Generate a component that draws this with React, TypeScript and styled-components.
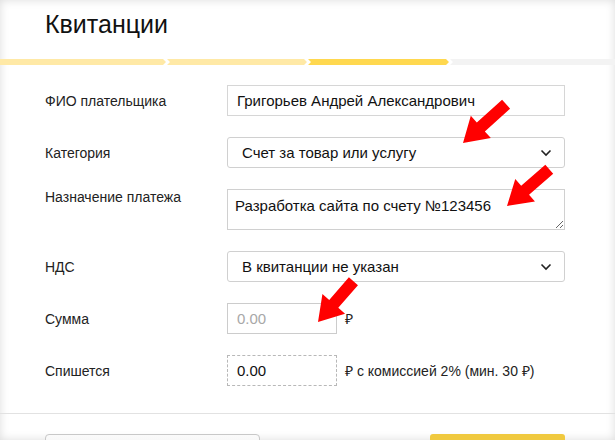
import React from 'react';
import styled, { createGlobalStyle } from 'styled-components';

const GlobalStyle = createGlobalStyle`
  html, body {
    margin: 0;
    padding: 0;
    background: #ffffff;
  }
  body {
    font-family: "Liberation Sans", Arial, sans-serif;
    color: #1a1a1a;
  }
`;

type Step = 'done' | 'active' | 'todo';

const steps: { state: Step; width: number }[] = [
  { state: 'done', width: 166 },
  { state: 'done', width: 140 },
  { state: 'active', width: 141 },
  { state: 'todo', width: 0 }
];

type Arrow = { tipX: number; tipY: number; angle: number; length: number };

// red annotation arrows drawn over the form
const arrows: Arrow[] = [
  { tipX: 463, tipY: 143, angle: 138, length: 58 },
  { tipX: 507, tipY: 206, angle: 139, length: 56 },
  { tipX: 318, tipY: 322, angle: 131, length: 54 }
];

const App: React.FC = () => (
  <>
    <GlobalStyle />
    <StyledPage>
      <StyledHeader>
        <StyledTitle>Квитанции</StyledTitle>
      </StyledHeader>
      <StyledProgress>
        {steps.map((step, i) => (
          <StyledStep
            key={i}
            state={step.state}
            first={i === 0}
            grow={step.width === 0}
            style={step.width ? { width: step.width } : undefined}
          />
        ))}
      </StyledProgress>

      <StyledForm>
        <StyledRow>
          <StyledLabel>ФИО плательщика</StyledLabel>
          <StyledInput defaultValue="Григорьев Андрей Александрович" />
        </StyledRow>
        <StyledRow>
          <StyledLabel>Категория</StyledLabel>
          <StyledSelect>
            <span>Счет за товар или услугу</span>
            <Chevron />
          </StyledSelect>
        </StyledRow>
        <StyledRow top>
          <StyledLabel>Назначение платежа</StyledLabel>
          <StyledTextarea defaultValue="Разработка сайта по счету №123456" />
        </StyledRow>
        <StyledRow>
          <StyledLabel>НДС</StyledLabel>
          <StyledSelect>
            <span>В квитанции не указан</span>
            <Chevron />
          </StyledSelect>
        </StyledRow>
        <StyledRow>
          <StyledLabel>Сумма</StyledLabel>
          <StyledAmount>
            <StyledSmallInput placeholder="0.00" />
            <StyledUnit>₽</StyledUnit>
          </StyledAmount>
        </StyledRow>
        <StyledRow>
          <StyledLabel>Спишется</StyledLabel>
          <StyledAmount>
            <StyledSmallInput dashed defaultValue="0.00" readOnly />
            <StyledUnit>₽ с комиссией 2% (мин. 30 ₽)</StyledUnit>
          </StyledAmount>
        </StyledRow>
      </StyledForm>

      <StyledFooter>
        <StyledGhostButton />
        <StyledYellowButton />
      </StyledFooter>

      <StyledArrows width="615" height="440" viewBox="0 0 615 440">
        {arrows.map((a, i) => (
          <polygon
            key={i}
            transform={`translate(${a.tipX} ${a.tipY}) rotate(${a.angle})`}
            points={`0,0 -24,-15 -24,-6 ${-a.length},-6 ${-a.length},6 -24,6 -24,15`}
            fill="#ff0000"
          />
        ))}
      </StyledArrows>
    </StyledPage>
  </>
);

const Chevron: React.FC = () => (
  <svg width="12" height="8" viewBox="0 0 12 8">
    <path d="M1.5 1.5 L6 6 L10.5 1.5" fill="none" stroke="#222" strokeWidth="1.6" />
  </svg>
);

const StyledPage = styled.div`
  position: relative;
  width: 615px;
  height: 440px;
  overflow: hidden;
  background: #fff;
  box-shadow: inset 0 0 10px rgba(0, 0, 0, 0.14);
`;

const StyledHeader = styled.div`
  padding: 10px 45px 0;
  height: 49px;
  box-sizing: border-box;
`;

const StyledTitle = styled.h1`
  margin: 0;
  font-size: 25px;
  font-weight: 400;
  line-height: 29px;
  color: #111;
`;

const StyledProgress = styled.div`
  display: flex;
  gap: 1px;
  height: 6px;
  margin-top: 10px;
`;

const StyledStep = styled.div<{ state: Step; first: boolean; grow: boolean }>`
  flex: ${({ grow }) => (grow ? '1' : '0 0 auto')};
  background: ${({ state }) =>
    state === 'done' ? '#ffe9a6' : state === 'active' ? '#ffd84f' : '#f3f3f3'};
  clip-path: ${({ first, grow }) =>
    grow
      ? 'polygon(0 0, 100% 0, 100% 100%, 0 100%, 3px 50%)'
      : first
        ? 'polygon(0 0, calc(100% - 3px) 0, 100% 50%, calc(100% - 3px) 100%, 0 100%)'
        : 'polygon(0 0, calc(100% - 3px) 0, 100% 50%, calc(100% - 3px) 100%, 0 100%, 3px 50%)'};
`;

const StyledForm = styled.div`
  display: flex;
  flex-direction: column;
  gap: 21px;
  padding: 20px 50px 0 45px;
`;

const StyledRow = styled.div<{ top?: boolean }>`
  display: flex;
  align-items: ${({ top }) => (top ? 'flex-start' : 'center')};
`;

const StyledLabel = styled.label`
  flex: 0 0 182px;
  font-size: 14px;
  color: #222;
  line-height: 16px;
`;

const fieldBase = `
  box-sizing: border-box;
  font-family: "Liberation Sans", Arial, sans-serif;
  font-size: 15px;
  color: #111;
  background: #fff;
  outline: none;
`;

const StyledInput = styled.input`
  ${fieldBase}
  width: 338px;
  height: 31px;
  border: 1px solid #d6d6d6;
  padding: 0 9px;
`;

const StyledSelect = styled.div`
  ${fieldBase}
  width: 338px;
  height: 31px;
  border: 1px solid #d0d0d0;
  border-radius: 3px;
  display: flex;
  align-items: center;
  justify-content: space-between;
  padding: 0 12px 0 14px;
`;

const StyledTextarea = styled.textarea`
  ${fieldBase}
  display: block;
  width: 338px;
  height: 41px;
  border: 1px solid #d0d0d0;
  padding: 7px;
  resize: vertical;
  line-height: 18px;
`;

const StyledAmount = styled.div`
  display: flex;
  align-items: center;
  gap: 8px;
`;

const StyledSmallInput = styled.input<{ dashed?: boolean }>`
  ${fieldBase}
  width: 110px;
  height: 31px;
  border: 1px ${({ dashed }) => (dashed ? 'dashed #b8b8b8' : 'solid #cccccc')};
  padding: 0 9px;
  &::placeholder {
    color: #a8a8a8;
  }
`;

const StyledUnit = styled.span`
  font-size: 14px;
  color: #222;
`;

const StyledFooter = styled.div`
  margin-top: 27px;
  border-top: 1px solid #e2e2e2;
  padding: 20px 50px 0 45px;
  display: flex;
  justify-content: space-between;
`;

const StyledGhostButton = styled.button`
  width: 215px;
  height: 36px;
  border: 1px solid #c8c8c8;
  border-radius: 4px;
  background: linear-gradient(#fafafa, #ececec);
`;

const StyledYellowButton = styled.button`
  width: 135px;
  height: 36px;
  border: none;
  border-radius: 3px;
  background: #f0c93f;
`;

const StyledArrows = styled.svg`
  position: absolute;
  left: 0;
  top: 0;
  pointer-events: none;
`;

export default App;
